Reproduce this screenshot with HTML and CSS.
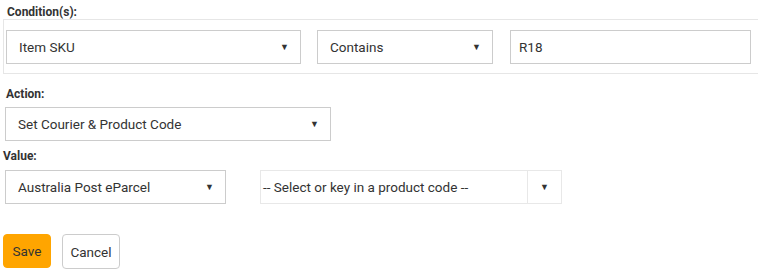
FILE: index.html
```html
<!DOCTYPE html>
<html>
<head>
<meta charset="utf-8">
<link rel="stylesheet" href="styles.css">
</head>
<body>
<div class="page">
  <div class="label label-cond">Condition(s):</div>
  <div class="cond-box">
    <div class="select sel-field"><span>Item SKU</span><span class="arrow">&#9660;</span></div>
    <div class="select sel-op"><span>Contains</span><span class="arrow">&#9660;</span></div>
    <div class="input inp-val">R18</div>
  </div>
  <div class="label label-action">Action:</div>
  <div class="select sel-action"><span>Set Courier &amp; Product Code</span><span class="arrow">&#9660;</span></div>
  <div class="label label-value">Value:</div>
  <div class="value-row">
    <div class="select sel-courier"><span>Australia Post eParcel</span><span class="arrow">&#9660;</span></div>
    <div class="combo">
      <div class="combo-text">-- Select or key in a product code --</div>
      <div class="combo-btn"><span class="arrow">&#9660;</span></div>
    </div>
  </div>
  <div class="buttons">
    <button class="btn btn-save">Save</button>
    <button class="btn btn-cancel">Cancel</button>
  </div>
</div>
</body>
</html>
```
FILE: styles.css
```css
html, body {
  margin: 0;
  padding: 0;
  background: #fff;
  overflow: hidden;
}
body {
  font-family: Roboto, "Liberation Sans", sans-serif;
  font-size: 13.5px;
  color: #333;
}
.page {
  width: 758px;
  height: 271px;
  overflow: hidden;
}
.label {
  font-weight: bold;
  font-size: 12px;
  color: #333;
  line-height: 14px;
}
.label-cond {
  padding: 5px 0 0 7px;
  height: 14px;
}
.cond-box {
  margin-left: 3px;
  width: 800px;
  border: 1px solid #e6e6e6;
  border-right: none;
  padding: 10px 2px 9px;
  display: flex;
  gap: 16px;
  box-sizing: border-box;
  height: 55px;
}
.select, .input {
  box-sizing: border-box;
  height: 34px;
  border: 1px solid #ccc;
  display: flex;
  align-items: center;
  justify-content: space-between;
  padding: 0 11px 0 12px;
  background: #fff;
}
.arrow {
  font-size: 9px;
  color: #333;
}
.sel-field { width: 295px; }
.sel-op { width: 176px; margin-right: 1px; }
.inp-val { width: 241px; padding-left: 8px; }
.label-action {
  padding: 13px 0 0 6px;
  height: 20px;
}
.sel-action {
  margin: 0 0 0 5px;
  width: 326px;
}
.label-value {
  padding: 8px 0 0 3px;
  height: 21px;
}
.value-row {
  display: flex;
  gap: 34px;
  margin-left: 5px;
}
.sel-courier { width: 221px; }
.combo {
  box-sizing: border-box;
  width: 302px;
  height: 34px;
  border: 1px solid #e8e8e8;
  display: flex;
}
.combo-text {
  flex: 1;
  display: flex;
  align-items: center;
  padding-left: 2px;
}
.combo-btn {
  width: 33px;
  border-left: 1px solid #e8e8e8;
  display: flex;
  align-items: center;
  justify-content: center;
}
.buttons {
  display: flex;
  gap: 11px;
  margin: 30px 0 0 3px;
}
.btn {
  font-family: Roboto, "Liberation Sans", sans-serif;
  font-size: 13.5px;
  color: #333;
  height: 34px;
  border-radius: 4px;
  padding: 0;
  cursor: pointer;
}
.btn-save {
  width: 48px;
  background: #ffa500;
  border: 1px solid #ffa500;
}
.btn-cancel {
  width: 58px;
  height: 35px;
  background: #fff;
  border: 1px solid #ccc;
}
```
